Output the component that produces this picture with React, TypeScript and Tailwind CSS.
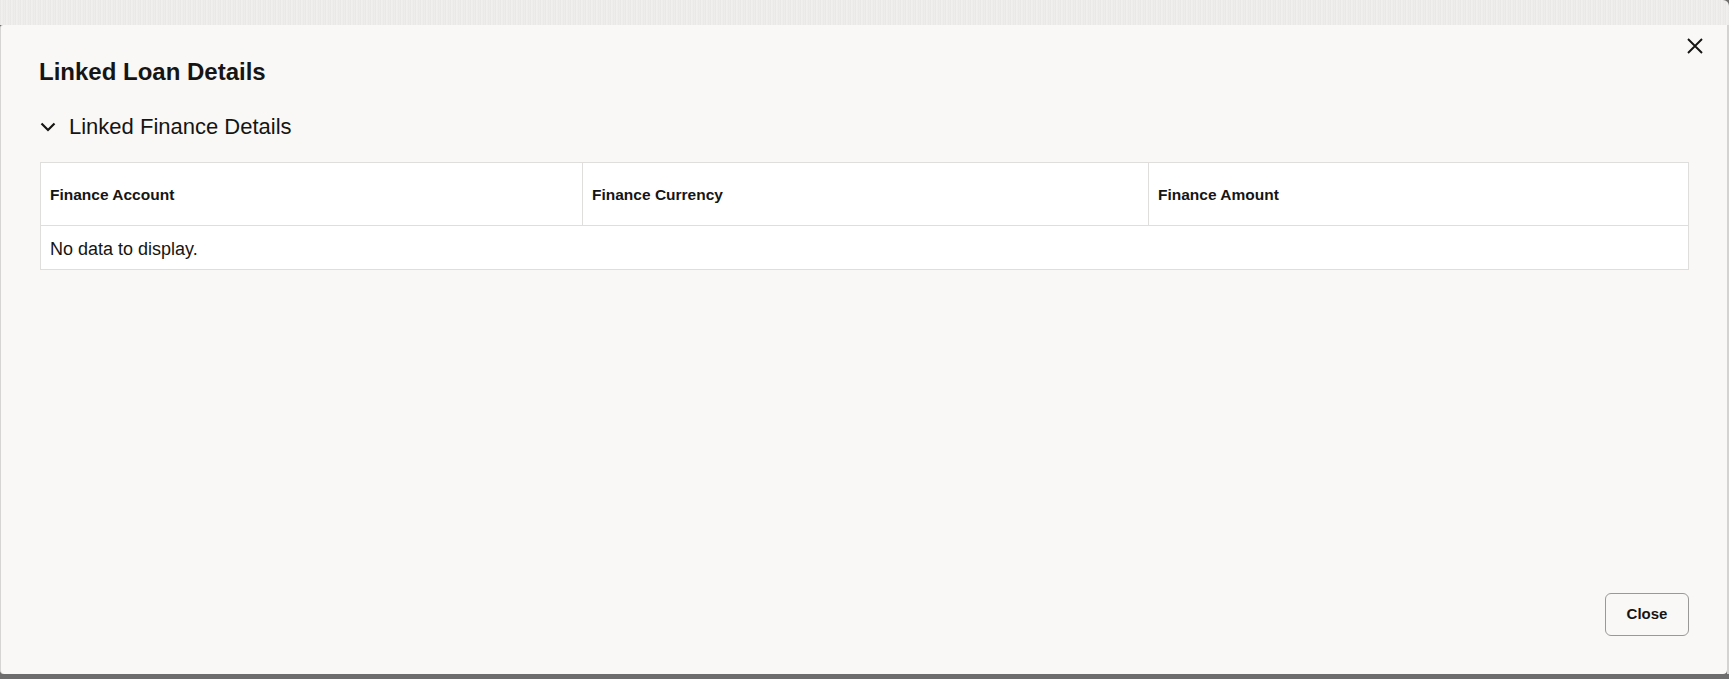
import React from 'react';

const columns = [
  { key: 'account', label: 'Finance Account', width: 'w-[541px]' },
  { key: 'currency', label: 'Finance Currency', width: 'w-[566px]' },
  { key: 'amount', label: 'Finance Amount', width: 'flex-1' },
];

const LinkedLoanDetails = () => {
  return (
    <div
      className="w-[1729px] h-[679px] flex flex-col overflow-hidden bg-[#6d6d6d] text-[#161513]"
      style={{ fontFamily: '"Liberation Sans", Arial, sans-serif' }}
    >
      {/* page behind the dialog */}
      <div className="h-[25px] shrink-0 rounded-tr-[6px] bg-[#ecebe9] bg-[repeating-linear-gradient(90deg,#e6e5e3_0px,#f4f3f1_2px,#e9e8e6_3px,#efeeec_5px)]" />

      <div className="flex">
        {/* dialog */}
        <div className="w-[1727px] h-[649px] flex flex-col bg-[#f9f8f6] border-l border-[#d6d5d3] rounded-b-[4px] rounded-tl-[3px]">
          <div className="flex justify-between items-start pt-[13px] pl-[38px] pr-[24px]">
            <h1 className="mt-[22px] text-[24px] leading-[24px] font-bold">Linked Loan Details</h1>
            <button className="w-4 h-4 text-[#161513]" aria-label="Close dialog">
              <svg width="16" height="16" viewBox="0 0 16 16" fill="none" stroke="currentColor" strokeWidth="1.9">
                <path d="M1 1 L15 15 M15 1 L1 15" />
              </svg>
            </button>
          </div>

          <div className="pl-[39px] pr-[38px]">
            <div className="mt-[32px] flex items-center gap-[13px] h-[22px]">
              <svg width="16" height="10" viewBox="0 0 16 10" fill="none" stroke="currentColor" strokeWidth="2.2">
                <path d="M1.5 1.5 L8 8 L14.5 1.5" />
              </svg>
              <h2 className="text-[22px] leading-[22px]">Linked Finance Details</h2>
            </div>

            <div className="mt-[24px] border border-[#dfdedc] bg-white">
              <div className="flex h-[63px] border-b border-[#dfdedc]">
                {columns.map((col, i) => (
                  <div
                    key={col.key}
                    className={`${col.width} flex items-center pt-[2px] px-[9px] text-[15.5px] leading-[20px] font-bold ${i > 0 ? 'border-l border-[#dfdedc]' : ''}`}
                  >
                    {col.label}
                  </div>
                ))}
              </div>
              <div className="flex items-center h-[43px] pt-[2px] px-[9px] text-[18px] leading-[24px]">
                No data to display.
              </div>
            </div>
          </div>

          <div className="flex-1" />

          <div className="flex justify-end pr-[38px] pb-[38px]">
            <button className="w-[84px] h-[43px] rounded-[6px] border border-[#9a9998] text-[15px] font-bold text-[#161513]">
              Close
            </button>
          </div>
        </div>
        <div className="w-[2px] bg-[#d4d3d1]" />
      </div>
    </div>
  );
};

export default LinkedLoanDetails;
